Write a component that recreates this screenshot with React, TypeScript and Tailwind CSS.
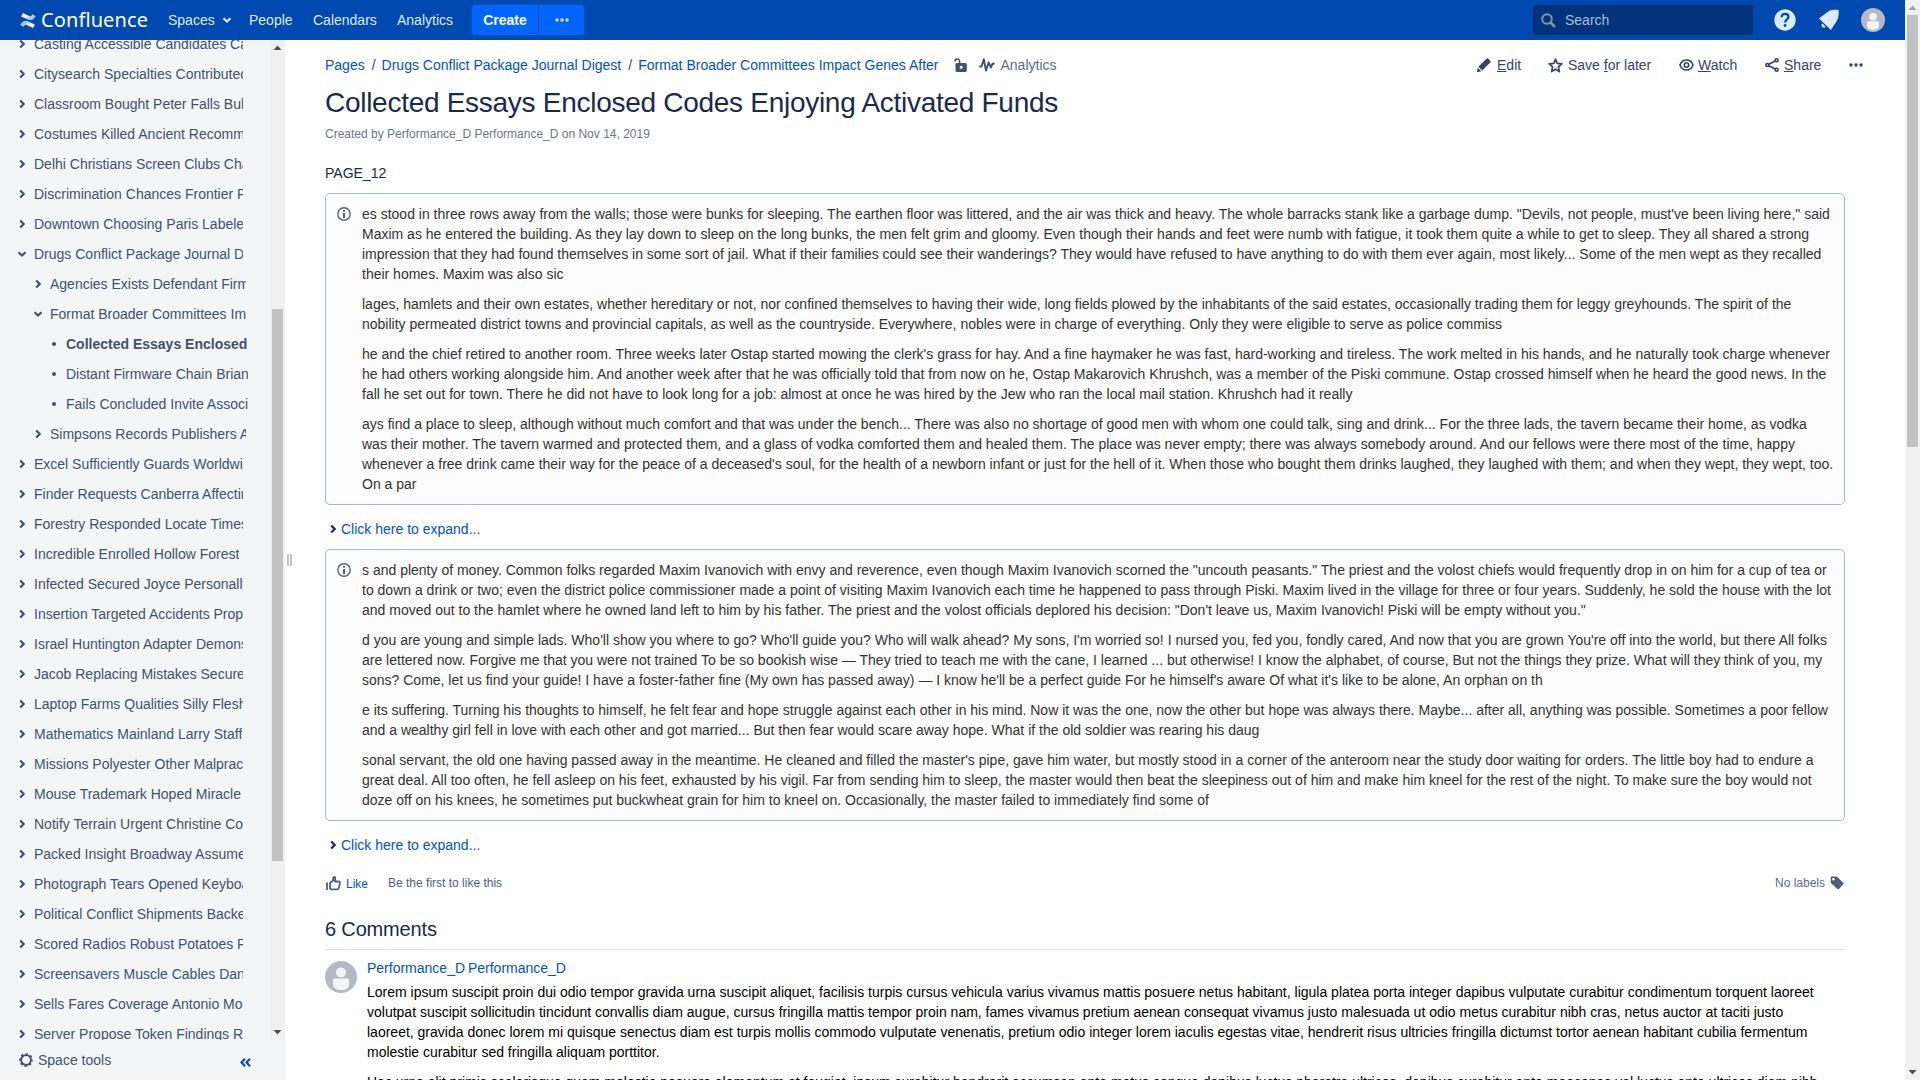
import React from "react";

type TreeItem = { label: string; level?: 0 | 1 | 2; open?: boolean; current?: boolean };

const TREE: TreeItem[] = [
  { label: "Casting Accessible Candidates Cast" },
  { label: "Citysearch Specialties Contributed" },
  { label: "Classroom Bought Peter Falls Bulk" },
  { label: "Costumes Killed Ancient Recommend" },
  { label: "Delhi Christians Screen Clubs Chain" },
  { label: "Discrimination Chances Frontier Pan" },
  { label: "Downtown Choosing Paris Labeled" },
  { label: "Drugs Conflict Package Journal Digest", open: true },
  { label: "Agencies Exists Defendant Firmware", level: 1 },
  { label: "Format Broader Committees Impact", level: 1, open: true },
  { label: "Collected Essays Enclosed", level: 2, current: true },
  { label: "Distant Firmware Chain Brian", level: 2 },
  { label: "Fails Concluded Invite Associates", level: 2 },
  { label: "Simpsons Records Publishers And", level: 1 },
  { label: "Excel Sufficiently Guards Worldwide" },
  { label: "Finder Requests Canberra Affecting" },
  { label: "Forestry Responded Locate Times" },
  { label: "Incredible Enrolled Hollow Forest" },
  { label: "Infected Secured Joyce Personally" },
  { label: "Insertion Targeted Accidents Proper" },
  { label: "Israel Huntington Adapter Demons" },
  { label: "Jacob Replacing Mistakes Secure" },
  { label: "Laptop Farms Qualities Silly Flesh" },
  { label: "Mathematics Mainland Larry Staff" },
  { label: "Missions Polyester Other Malpractice" },
  { label: "Mouse Trademark Hoped Miracle" },
  { label: "Notify Terrain Urgent Christine Cox" },
  { label: "Packed Insight Broadway Assume" },
  { label: "Photograph Tears Opened Keyboard" },
  { label: "Political Conflict Shipments Backed" },
  { label: "Scored Radios Robust Potatoes Re" },
  { label: "Screensavers Muscle Cables Dan" },
  { label: "Sells Fares Coverage Antonio Mod" },
  { label: "Server Propose Token Findings Re" },
];

const PANEL_ONE = [
  [
    "es stood in three rows away from the walls; those were bunks for sleeping. The earthen floor was littered, and the air was thick and heavy. The whole barracks stank like a garbage dump. \"Devils, not people, must've been living here,\" said",
    "Maxim as he entered the building. As they lay down to sleep on the long bunks, the men felt grim and gloomy. Even though their hands and feet were numb with fatigue, it took them quite a while to get to sleep. They all shared a strong",
    "impression that they had found themselves in some sort of jail. What if their families could see their wanderings? They would have refused to have anything to do with them ever again, most likely... Some of the men wept as they recalled",
    "their homes. Maxim was also sic",
  ],
  [
    "lages, hamlets and their own estates, whether hereditary or not, nor confined themselves to having their wide, long fields plowed by the inhabitants of the said estates, occasionally trading them for leggy greyhounds. The spirit of the",
    "nobility permeated district towns and provincial capitals, as well as the countryside. Everywhere, nobles were in charge of everything. Only they were eligible to serve as police commiss",
  ],
  [
    "he and the chief retired to another room. Three weeks later Ostap started mowing the clerk's grass for hay. And a fine haymaker he was fast, hard-working and tireless. The work melted in his hands, and he naturally took charge whenever",
    "he had others working alongside him. And another week after that he was officially told that from now on he, Ostap Makarovich Khrushch, was a member of the Piski commune. Ostap crossed himself when he heard the good news. In the",
    "fall he set out for town. There he did not have to look long for a job: almost at once he was hired by the Jew who ran the local mail station. Khrushch had it really",
  ],
  [
    "ays find a place to sleep, although without much comfort and that was under the bench... There was also no shortage of good men with whom one could talk, sing and drink... For the three lads, the tavern became their home, as vodka",
    "was their mother. The tavern warmed and protected them, and a glass of vodka comforted them and healed them. The place was never empty; there was always somebody around. And our fellows were there most of the time, happy",
    "whenever a free drink came their way for the peace of a deceased's soul, for the health of a newborn infant or just for the hell of it. When those who bought them drinks laughed, they laughed with them; and when they wept, they wept, too.",
    "On a par",
  ],
];

const PANEL_TWO = [
  [
    "s and plenty of money. Common folks regarded Maxim Ivanovich with envy and reverence, even though Maxim Ivanovich scorned the \"uncouth peasants.\" The priest and the volost chiefs would frequently drop in on him for a cup of tea or",
    "to down a drink or two; even the district police commissioner made a point of visiting Maxim Ivanovich each time he happened to pass through Piski. Maxim lived in the village for three or four years. Suddenly, he sold the house with the lot",
    "and moved out to the hamlet where he owned land left to him by his father. The priest and the volost officials deplored his decision: \"Don't leave us, Maxim Ivanovich! Piski will be empty without you.\"",
  ],
  [
    "d you are young and simple lads. Who'll show you where to go? Who'll guide you? Who will walk ahead? My sons, I'm worried so! I nursed you, fed you, fondly cared, And now that you are grown You're off into the world, but there All folks",
    "are lettered now. Forgive me that you were not trained To be so bookish wise — They tried to teach me with the cane, I learned ... but otherwise! I know the alphabet, of course, But not the things they prize. What will they think of you, my",
    "sons? Come, let us find your guide! I have a foster-father fine (My own has passed away) — I know he'll be a perfect guide For he himself's aware Of what it's like to be alone, An orphan on th",
  ],
  [
    "e its suffering. Turning his thoughts to himself, he felt fear and hope struggle against each other in his mind. Now it was the one, now the other but hope was always there. Maybe... after all, anything was possible. Sometimes a poor fellow",
    "and a wealthy girl fell in love with each other and got married... But then fear would scare away hope. What if the old soldier was rearing his daug",
  ],
  [
    "sonal servant, the old one having passed away in the meantime. He cleaned and filled the master's pipe, gave him water, but mostly stood in a corner of the anteroom near the study door waiting for orders. The little boy had to endure a",
    "great deal. All too often, he fell asleep on his feet, exhausted by his vigil. Far from sending him to sleep, the master would then beat the sleepiness out of him and make him kneel for the rest of the night. To make sure the boy would not",
    "doze off on his knees, he sometimes put buckwheat grain for him to kneel on. Occasionally, the master failed to immediately find some of",
  ],
];

const COMMENT = [
  [
    "Lorem ipsum suscipit proin dui odio tempor gravida urna suscipit aliquet, facilisis turpis cursus vehicula varius vivamus mattis posuere netus habitant, ligula platea porta integer dapibus vulputate curabitur condimentum torquent laoreet",
    "volutpat suscipit sollicitudin tincidunt convallis diam augue, cursus fringilla mattis tempor proin nam, fames vivamus pretium aenean consequat vivamus justo malesuada ut odio metus curabitur nibh cras, netus auctor at taciti justo",
    "laoreet, gravida donec lorem mi quisque senectus diam est turpis mollis commodo vulputate venenatis, pretium odio integer lorem iaculis egestas vitae, hendrerit risus ultricies fringilla dictumst tortor aenean habitant cubilia fermentum",
    "molestie curabitur sed fringilla aliquam porttitor.",
  ],
  [
    "Hac urna elit primis scelerisque quam molestie posuere elementum et feugiat, ipsum curabitur hendrerit accumsan ante metus congue dapibus luctus pharetra ultrices, dapibus curabitur ante maecenas vel luctus ante ultrices diam nibh",
  ],
];

function Chevron({ down = false, className = "" }: { down?: boolean; className?: string }) {
  return (
    <svg width="10" height="10" viewBox="0 0 10 10" fill="none" stroke="currentColor" strokeWidth="2.200" className={className}>
      {down ? <path d="M1.500 3.200 5 6.500l3.500-3.300" /> : <path d="M3.200 1.500 6.700 5 3.200 8.500" />}
    </svg>
  );
}

function Dots() {
  return (
    <svg width="14" height="4" viewBox="0 0 14 4" fill="currentColor">
      <circle cx="2" cy="2" r="1.700" />
      <circle cx="7" cy="2" r="1.700" />
      <circle cx="12" cy="2" r="1.700" />
    </svg>
  );
}

function Avatar({ size }: { size: number }) {
  return (
    <svg width={size} height={size} viewBox="0 0 32 32" className="shrink-0">
      <circle cx="16" cy="16" r="16" fill="#b3bac5" />
      <circle cx="16" cy="11.500" r="5" fill="#f4f5f7" />
      <path d="M8 19a1.500 1.500 0 0 1 1.500-1.500h13A1.500 1.500 0 0 1 24 19v5c0 3-3.500 5-8 5s-8-2-8-5z" fill="#f4f5f7" />
    </svg>
  );
}

function ScrollArrow({ up = false, light = false }: { up?: boolean; light?: boolean }) {
  return (
    <svg width="15" height="15" viewBox="0 0 15 15" fill={light ? "#a3a3a3" : "#505050"} className="shrink-0">
      {up ? <path d="M7.500 5.500 11.500 10h-8z" /> : <path d="M7.500 9.500 11.500 5h-8z" />}
    </svg>
  );
}

function Paragraphs({ items }: { items: string[][] }) {
  return (
    <div className="flex flex-col gap-2.5 whitespace-nowrap">
      {items.map((lines, i) => (
        <p key={i}>
          {lines.map((line, j) => (
            <span key={j} className="block">{line}</span>
          ))}
        </p>
      ))}
    </div>
  );
}

function InfoPanel({ items }: { items: string[][] }) {
  return (
    <section className="flex rounded-[5px] border border-[#aab8c6] bg-[#fcfcfc] py-2.5 pl-[11px] text-[#333]">
      <svg width="14" height="14" viewBox="0 0 14 14" className="mt-[3px] mr-[11px] shrink-0">
        <circle cx="7" cy="7" r="6.200" fill="none" stroke="#4a6785" strokeWidth="1.400" />
        <path d="M6 3h2v1.700H6zM6 6h2v5H6z" fill="#4a6785" />
      </svg>
      <Paragraphs items={items} />
    </section>
  );
}

function Expander() {
  return (
    <div className="flex h-11 items-center pt-1">
      <Chevron className="ml-[3px] text-[#172b4d]" />
      <a className="ml-[3px] text-[#0052cc]">Click here to expand...</a>
    </div>
  );
}

function Header() {
  return (
    <header className="flex h-10 w-[1905px] shrink-0 items-center bg-[#0049b0] text-[#deebff]">
      <svg width="16" height="15" viewBox="0 0 16 15" className="ml-5 shrink-0">
        <defs>
          <linearGradient id="swooshLow" x1="0.900" y1="1" x2="0.100" y2="0.300">
            <stop offset="0.300" stopColor="#fff" />
            <stop offset="1" stopColor="#fff" stopOpacity="0.600" />
          </linearGradient>
          <linearGradient id="swooshTop" x1="0.100" y1="0" x2="0.900" y2="0.700">
            <stop offset="0.300" stopColor="#fff" />
            <stop offset="1" stopColor="#fff" stopOpacity="0.600" />
          </linearGradient>
        </defs>
        <path d="M.3 11.700C2.800 7.700 5.200 6.800 9.500 8.900l5.400 2.500-1.900 3.500-5.200-2.500c-2.200-1-2.900-.9-4.400 1.400z" fill="url(#swooshLow)" />
        <path d="M15.700 3.300C13.200 7.300 10.800 8.200 6.500 6.100L1.100 3.600 3 .1l5.200 2.500c2.200 1 2.900.9 4.400-1.400z" fill="url(#swooshTop)" />
      </svg>
      <span className="w-[126px] pl-[5px] font-['Noto_Sans'] text-[20px] leading-[30px] tracking-[0.1px] text-white">Confluence</span>
      <nav className="flex items-center">
        <span className="ml-[6px] w-[54px]">Spaces</span>
        <Chevron down className="mr-[17px]" />
        <span className="w-16">People</span>
        <span className="w-[84px]">Calendars</span>
        <span className="w-[76px]">Analytics</span>
      </nav>
      <button className="-ml-px h-[30px] w-[66px] rounded-l-[3px] bg-[#0065ff] font-bold text-white">Create</button>
      <button className="ml-px flex h-[30px] w-[45px] items-center justify-center rounded-r-[3px] bg-[#0065ff]"><Dots /></button>
      <div className="mr-5 ml-auto flex items-center">
        <div className="flex h-[30px] w-[220px] items-center rounded-[3px] bg-[#03347b] pl-2 text-[#a5bcdf]">
          <svg width="15" height="15" viewBox="0 0 15 15" fill="none" stroke="#8993a4" strokeWidth="2" className="mr-[9px]">
            <circle cx="6" cy="6" r="4.800" />
            <path d="m9.500 9.500 4.500 4.500" strokeWidth="2.500" />
          </svg>
          Search
        </div>
        <svg width="22" height="22" viewBox="0 0 22 22" className="ml-[21px]">
          <circle cx="11" cy="11" r="10.700" fill="#deebff" />
          <path d="M7.600 8.200C7.600 5.700 9 4.800 11 4.800s3.500 1.100 3.500 3c0 2.600-3.400 2.700-3.400 5.700" fill="none" stroke="#0049b0" strokeWidth="2.200" />
          <circle cx="11.100" cy="16.500" r="1.400" fill="#0049b0" />
        </svg>
        <svg width="22" height="22" viewBox="0 0 22 22" fill="#deebff" className="ml-[22px]">
          <path d="M1 9.500 10.500 2.200C12 1.200 16 .8 19.500.8c.8 0 1.200.5 1.200 1.200 0 3.500-.4 7.500-1.400 9L13 21z" />
          <path d="M4.200 14.300 7.600 17.800a2.300 2.300 0 0 1-3.400-3.500z" />
        </svg>
        <span className="ml-[21px]"><Avatar size={24} /></span>
      </div>
    </header>
  );
}

function TreeRow({ item }: { item: TreeItem }) {
  const level = item.level ?? 0;
  const indent = level === 2 ? "pl-[49px] w-[248px]" : level === 1 ? "pl-[33px] w-[246px]" : "pl-[17px] w-[243px]";
  return (
    <li className={`flex h-[30px] shrink-0 items-center ${indent}`}>
      {level === 2 ? (
        <svg width="10" height="10" viewBox="0 0 10 10" className="mr-[7px] shrink-0" fill="currentColor">
          <circle cx="5" cy="5" r="2" />
        </svg>
      ) : (
        <Chevron down={item.open} className="mr-[7px] shrink-0" />
      )}
      <span className={item.current ? "overflow-hidden font-bold whitespace-nowrap" : "overflow-hidden whitespace-nowrap"}>{item.label}</span>
    </li>
  );
}

function Sidebar() {
  return (
    <aside className="flex w-[285px] shrink-0 flex-col bg-[#f4f5f7] text-[#42526e]">
      <div className="flex h-[1000px] shrink-0 overflow-hidden">
        <ul className="-mt-[11px] flex w-[270px] flex-col">
          {TREE.map((item) => <TreeRow key={item.label} item={item} />)}
        </ul>
        <div className="flex w-[15px] flex-col items-center bg-[#f1f1f1]">
          <ScrollArrow up />
          <div className="mt-[254px] h-[552px] w-[11px] bg-[#c1c1c1]" />
          <div className="mt-auto"><ScrollArrow /></div>
        </div>
      </div>
      <div className="flex h-10 items-center pl-[19px]">
        <svg width="14" height="14" viewBox="0 0 14 14" fill="none" stroke="currentColor">
          <circle cx="7" cy="7" r="4.900" strokeWidth="1.900" />
          <circle cx="7" cy="7" r="6.100" strokeWidth="1.600" strokeDasharray="2.300 2.490" strokeDashoffset="1.150" />
        </svg>
        <span className="ml-[5px]">Space tools</span>
        <svg width="11" height="9" viewBox="0 0 11 9" fill="none" stroke="#0052cc" strokeWidth="2.200" className="mt-1 mr-[34px] ml-auto">
          <path d="M5 .7 1.500 4.500 5 8.300M10 .7 6.500 4.500 10 8.300" />
        </svg>
      </div>
    </aside>
  );
}

function Toolbar() {
  return (
    <div className="flex h-5 items-center text-[#344563]">
      <a className="text-[#0052cc]">Pages</a>
      <span className="mr-[6px] ml-[7px]">/</span>
      <a className="text-[#0052cc]">Drugs Conflict Package Journal Digest</a>
      <span className="mr-[6px] ml-[7px]">/</span>
      <a className="text-[#0052cc]">Format Broader Committees Impact Genes After</a>
      <svg width="13" height="14" viewBox="0 0 13 14" className="ml-[15px]">
        <path d="M1 3.500A2.300 2.300 0 0 1 5.600 3.300V7" fill="none" stroke="#42526e" strokeWidth="1.500" />
        <rect x="1.500" y="5" width="11.300" height="9" rx="1.500" fill="#42526e" />
        <circle cx="7.200" cy="9.300" r="1.500" fill="#fff" />
      </svg>
      <svg width="16" height="14" viewBox="0 0 16 14" fill="none" stroke="#42526e" strokeWidth="1.900" strokeLinejoin="round" strokeLinecap="round" className="ml-3">
        <path d="M1 8.500h1.500L4.800 1.200 7 12.500 9.700 4.500 12 9.500l1.500-3.700h1.500" />
      </svg>
      <span className="ml-[6px] text-[#5e6c84]">Analytics</span>

      <div className="mr-[-18px] ml-auto flex items-center">
        <svg width="14" height="14" viewBox="0 0 14 14" fill="currentColor">
          <path d="M1.400 8.800 9.500.8a1.300 1.300 0 0 1 1.800 0l1.900 1.900a1.300 1.300 0 0 1 0 1.800l-8 8.100zM.9 9.700l3.500 3.500-3.700.8a.6.600 0 0 1-.7-.7z" />
        </svg>
        <span className="ml-[6px] w-[51px]"><u>E</u>dit</span>
        <svg width="15" height="15" viewBox="0 0 15 15" fill="none" stroke="currentColor" strokeWidth="1.700" strokeLinejoin="round">
          <path d="m7.500 1.200 1.700 4.200 4.700.4-3.500 3.100 1 4.700-3.900-2.400-3.900 2.400 1-4.700L1.100 5.800l4.700-.4z" />
        </svg>
        <span className="ml-[5px] w-[111px]">Save <u>f</u>or later</span>
        <svg width="15" height="12" viewBox="0 0 15 12" fill="none" stroke="currentColor" strokeWidth="1.600">
          <path d="M.9 6C2.200 2.800 4.500 1 7.500 1s5.300 1.800 6.600 5c-1.300 3.200-3.600 5-6.600 5S2.200 9.200.9 6z" />
          <circle cx="7.500" cy="6" r="2.200" />
        </svg>
        <span className="ml-1 w-[67px]"><u>W</u>atch</span>
        <svg width="14" height="14" viewBox="0 0 14 14" fill="none" stroke="currentColor" strokeWidth="1.600">
          <circle cx="2.300" cy="7" r="1.500" />
          <circle cx="11.600" cy="2.300" r="1.500" />
          <circle cx="11.600" cy="11.700" r="1.500" />
          <path d="m3.700 6.300 6.600-3.300M3.700 7.700l6.600 3.300" />
        </svg>
        <span className="ml-[5px] w-[65px]"><u>S</u>hare</span>
        <Dots />
      </div>
    </div>
  );
}

export default function App() {
  return (
    <div className="flex h-[1080px] w-[1920px] overflow-hidden bg-white font-['Liberation_Sans',sans-serif] text-[14px] leading-5 text-[#172b4d]">
      <div className="flex w-[1905px] shrink-0 flex-col">
        <Header />
        <div className="flex h-[1040px] overflow-hidden">
          <Sidebar />
          <div className="flex w-10 shrink-0 items-center pl-0.5">
            <div className="h-3 w-[5px] border-x-2 border-[#c1c7d0]" />
          </div>
          <main className="w-[1520px] shrink-0 pt-[15px]">
            <Toolbar />
            <h1 className="mt-3 h-[32px] text-[28px] leading-8 tracking-[-0.28px]">Collected Essays Enclosed Codes Enjoying Activated Funds</h1>
            <p className="mt-[5px] text-xs leading-5 text-[#6b778c]">Created by Performance_D Performance_D on Nov 14, 2019</p>
            <p className="mt-[19px] mb-2.5">PAGE_12</p>
            <InfoPanel items={PANEL_ONE} />
            <Expander />
            <InfoPanel items={PANEL_TWO} />
            <Expander />
            <div className="mt-2 flex h-5 items-center text-xs text-[#505f79]">
              <svg width="15" height="15" viewBox="0 0 15 15" fill="none" stroke="currentColor" strokeWidth="1.800" strokeLinejoin="round" className="ml-px">
                <path d="M1 6.500v7.500" />
                <path d="M4 7 7.200 4.300V2c0-1.400 2.100-1.400 2.100.2l-.5 3.300h3.800c1 0 1.500.7 1.300 1.600l-1.100 5c-.2.900-.7 1.300-1.500 1.300H5.500L4 12.500z" />
              </svg>
              <a className="mt-px ml-[5px] text-[#0052cc]">Like</a>
              <span className="ml-5">Be the first to like this</span>
              <span className="ml-auto text-[#5e6c84]">No labels</span>
              <svg width="14" height="14" viewBox="0 0 14 14" fill="#505f79" className="ml-[5px] mr-px">
                <path fillRule="evenodd" d="M2 .6h4.200c.5 0 .9.200 1.200.5l5.700 5.600c.6.600.6 1.300 0 1.900l-4 4.200c-.6.600-1.300.6-1.900 0L1.300 7.400A2 2 0 0 1 .7 6V2C.7 1.100 1.200.6 2 .6zm1.400 1.300a1.300 1.300 0 1 0 0 2.600 1.300 1.300 0 0 0 0-2.600z" />
              </svg>
            </div>
            <h2 className="mt-6 h-[33px] border-b border-[#dfe1e6] text-[20px] leading-6 tracking-[-0.16px]">6 Comments</h2>
            <div className="mt-2 flex gap-2.5">
              <div className="mt-[3px]"><Avatar size={32} /></div>
              <div className="text-black">
                <a className="mb-1 block text-[#0052cc] [word-spacing:-1px]">Performance_D Performance_D</a>
                <Paragraphs items={COMMENT} />
              </div>
            </div>
          </main>
        </div>
      </div>
      <div className="flex w-[15px] shrink-0 flex-col items-center bg-[#f1f1f1]">
        <ScrollArrow up light />
        <div className="h-[432px] w-[11px] bg-[#c1c1c1]" />
        <div className="mt-auto"><ScrollArrow /></div>
      </div>
    </div>
  );
}
